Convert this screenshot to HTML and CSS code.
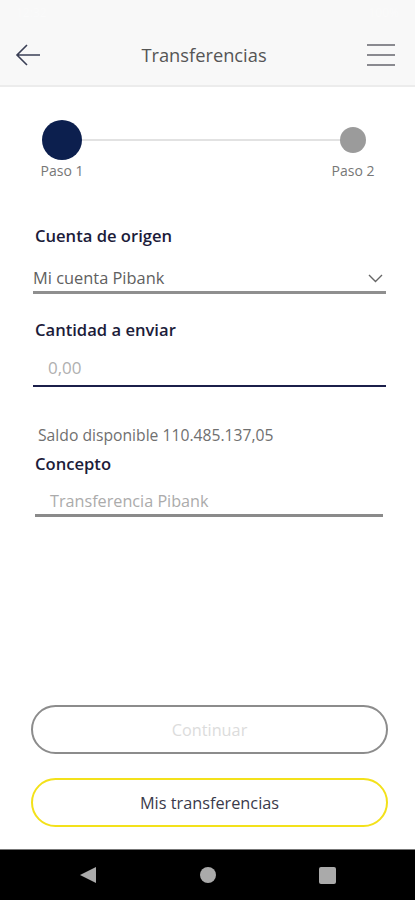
FILE: index.html
```html
<!DOCTYPE html>
<html lang="es">
<head>
    <meta charset="UTF-8">
    <meta name="viewport" content="width=device-width, initial-scale=1.0">
    <title>Transferencias</title>
    <link rel="stylesheet" href="styles.css">
</head>
<body>
    <div class="status">
        <span>12:32</span>
        <span>100%</span>
    </div>

    <header class="topbar">
        <svg class="back" width="26" height="22" viewBox="0 0 26 22">
            <path d="M12 1 L2 11 L12 21 M2 11 H25" fill="none" stroke="#3a3f55" stroke-width="1.6"/>
        </svg>
        <h1>Transferencias</h1>
        <div class="menu">
            <span></span><span></span><span></span>
        </div>
    </header>

    <main class="content">
        <div class="steps">
            <div class="step">
                <div class="dot active"></div>
                <span>Paso 1</span>
            </div>
            <div class="track"></div>
            <div class="step">
                <div class="dot"></div>
                <span>Paso 2</span>
            </div>
        </div>

        <label class="lbl lbl-first">Cuenta de origen</label>
        <div class="field select">
            <span>Mi cuenta Pibank</span>
            <svg width="15" height="9" viewBox="0 0 15 9">
                <path d="M1 1 L7.5 7.5 L14 1" fill="none" stroke="#666" stroke-width="1.4"/>
            </svg>
        </div>

        <label class="lbl lbl-amount">Cantidad a enviar</label>
        <div class="field amount">
            <span>0,00</span>
        </div>

        <p class="saldo">Saldo disponible 110.485.137,05</p>

        <label class="lbl lbl-concept">Concepto</label>
        <div class="field concept">
            <span>Transferencia Pibank</span>
        </div>

        <div class="actions">
            <button class="btn btn-off">Continuar</button>
            <button class="btn btn-yellow">Mis transferencias</button>
        </div>
    </main>

    <nav class="navbar">
        <span class="nav-back"></span>
        <span class="nav-home"></span>
        <span class="nav-recent"></span>
    </nav>
</body>
</html>
```

FILE: styles.css
```css
* {
    box-sizing: border-box;
}
body {
    margin: 0;
    font-family: 'Open Sans', 'Noto Sans', sans-serif;
    background: #fff;
    color: #333;
    width: 415px;
    height: 900px;
    display: flex;
    flex-direction: column;
}
.status {
    height: 24px;
    background: #f8f8f8;
    color: #fafafa;
    font-size: 12px;
    display: flex;
    justify-content: space-between;
    align-items: center;
    padding: 0 16px;
}
.topbar {
    height: 63px;
    background: #f8f8f8;
    border-bottom: 2px solid #ececec;
    display: flex;
    align-items: center;
    padding: 0 20px 0 15px;
}
.topbar h1 {
    flex: 1;
    margin: 0;
    text-align: center;
    font-size: 18.3px;
    font-weight: 400;
    color: #555;
}
.menu {
    width: 28px;
    display: flex;
    flex-direction: column;
    gap: 8px;
}
.menu span {
    height: 2px;
    background: #8a8a90;
}
.content {
    flex: 1;
    display: flex;
    flex-direction: column;
    padding: 0 29px 0 33px;
}
.steps {
    display: flex;
    align-items: flex-start;
    padding: 33px 11px 0 7px;
}
.step {
    display: flex;
    flex-direction: column;
    align-items: center;
    width: 44px;
}
.step span {
    font-size: 14px;
    line-height: 18px;
    color: #777;
    margin-top: 2px;
    white-space: nowrap;
}
.dot {
    width: 26px;
    height: 26px;
    border-radius: 50%;
    background: #9b9b9b;
    margin: 7px 0;
}
.dot.active {
    width: 40px;
    height: 40px;
    margin: 0;
    background: #0c1f4e;
}
.track {
    flex: 1;
    height: 2px;
    background: #e2e2e2;
    margin: 19px -11px 0 -2px;
}
.lbl {
    font-size: 16.6px;
    line-height: 20px;
    font-weight: 600;
    color: #1c1c3a;
    padding-left: 2px;
}
.lbl-first {
    margin-top: 46px;
}
.field {
    display: flex;
    align-items: center;
    justify-content: space-between;
    font-size: 16.4px;
    line-height: 20px;
    color: #606060;
}
.select {
    margin-top: 22px;
    border-bottom: 3px solid #8f8f8f;
    padding: 0 3px 3px 0;
}
.lbl-amount {
    margin-top: 26px;
}
.amount {
    margin-top: 17px;
    border-bottom: 2px solid #1b1f4a;
    padding: 0 0 6px 15px;
    font-size: 17px;
    line-height: 22px;
    color: #b0b0b0;
}
.saldo {
    margin: 38px 0 0 5px;
    font-size: 15.7px;
    line-height: 20px;
    color: #707070;
}
.lbl-concept {
    margin-top: 9px;
}
.concept {
    margin: 17px 3px 0 2px;
    border-bottom: 3px solid #8a8a8a;
    padding: 0 0 3px 15px;
    font-size: 16.2px;
    color: #ababab;
}
.actions {
    margin-top: auto;
    display: flex;
    flex-direction: column;
    gap: 24px;
    padding-bottom: 22px;
    margin-left: -2px;
    margin-right: -2px;
}
.btn {
    height: 49px;
    border-radius: 25px;
    background: #fff;
    font-family: inherit;
    font-size: 16.3px;
}
.btn-off {
    border: 2px solid #8c8c8c;
    color: #dcdcdc;
}
.btn-yellow {
    border: 2px solid #f3e11a;
    color: #3a3a4a;
}
.navbar {
    height: 51px;
    background: #000;
    border-top: 1px solid #777;
    display: flex;
    align-items: center;
    justify-content: space-between;
    padding: 0 79px 0 80px;
}
.nav-back {
    width: 0;
    height: 0;
    border-top: 8.5px solid transparent;
    border-bottom: 8.5px solid transparent;
    border-right: 16px solid #aaa;
}
.nav-home {
    width: 16px;
    height: 16px;
    border-radius: 50%;
    background: #aaa;
}
.nav-recent {
    width: 17px;
    height: 17px;
    border-radius: 2px;
    background: #aaa;
}
```
